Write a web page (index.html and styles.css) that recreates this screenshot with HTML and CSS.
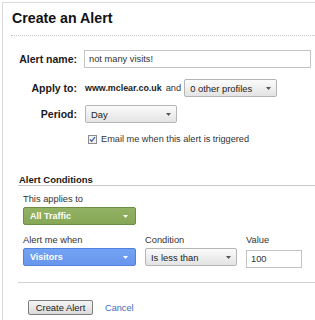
FILE: index.html
```html
<!DOCTYPE html>
<html lang="en">
<head>
    <meta charset="UTF-8">
    <title>Create an Alert</title>
    <link rel="stylesheet" href="styles.css">
</head>
<body>
    <main class="panel">
        <h1 class="panel-title">Create an Alert</h1>

        <form class="alert-form">
            <div class="row row-name">
                <label class="label" for="alert-name">Alert name:</label>
                <input type="text" id="alert-name" class="text-input name-input" value="not many visits!">
            </div>

            <div class="row row-apply">
                <span class="label">Apply to:</span>
                <span class="site">www.mclear.co.uk</span>
                <span class="and">and</span>
                <div class="select select-gray select-profiles">
                    <span>0 other profiles</span>
                    <svg class="arrow" width="5" height="3" viewBox="0 0 5 3"><polygon points="0,0 5,0 2.5,3" fill="#555"/></svg>
                </div>
            </div>

            <div class="row row-period">
                <span class="label">Period:</span>
                <div class="select select-gray select-period">
                    <span>Day</span>
                    <svg class="arrow" width="5" height="3" viewBox="0 0 5 3"><polygon points="0,0 5,0 2.5,3" fill="#555"/></svg>
                </div>
            </div>

            <div class="row row-check">
                <svg class="checkbox" width="9" height="9" viewBox="0 0 9 9">
                    <rect x="0.5" y="0.5" width="8" height="8" fill="#f2f2f2" stroke="#8c8c8c"/>
                    <path d="M2 4.5 L3.7 6.3 L7 2.2" fill="none" stroke="#3b5ea6" stroke-width="1.3"/>
                </svg>
                <span class="check-text">Email me when this alert is triggered</span>
            </div>

            <section class="conditions">
                <h2 class="cond-heading">Alert Conditions</h2>
                <div class="cond-body">
                    <div class="field-label first">This applies to</div>
                    <div class="select select-green">
                        <span>All Traffic</span>
                        <svg class="arrow" width="5" height="3" viewBox="0 0 5 3"><polygon points="0,0 5,0 2.5,3" fill="#fff"/></svg>
                    </div>

                    <div class="cond-row">
                        <div class="col col-metric">
                            <div class="field-label">Alert me when</div>
                            <div class="select select-blue">
                                <span>Visitors</span>
                                <svg class="arrow" width="5" height="3" viewBox="0 0 5 3"><polygon points="0,0 5,0 2.5,3" fill="#fff"/></svg>
                            </div>
                        </div>
                        <div class="col col-condition">
                            <div class="field-label">Condition</div>
                            <div class="select select-gray">
                                <span>Is less than</span>
                                <svg class="arrow" width="5" height="3" viewBox="0 0 5 3"><polygon points="0,0 5,0 2.5,3" fill="#555"/></svg>
                            </div>
                        </div>
                        <div class="col col-value">
                            <div class="field-label">Value</div>
                            <input type="text" class="text-input value-input" value="100">
                        </div>
                    </div>
                </div>

                <div class="footer-sep"></div>
                <div class="actions">
                    <button type="button" class="btn">Create Alert</button>
                    <a href="#" class="cancel">Cancel</a>
                </div>
            </section>
        </form>
    </main>
</body>
</html>
```

FILE: styles.css
```css
/* --- Base --- */
:root {
    --font-body: "Liberation Sans", Arial, sans-serif;
    --color-text: #333333;
    --color-label: #1a1a1a;
    --color-line: #d2d2d2;
}

* { box-sizing: border-box; }
html, body { margin: 0; padding: 0; background: #ffffff; height: 100%; overflow: hidden; }
body { font-family: var(--font-body); color: var(--color-text); }

/* --- Panel --- */
.panel {
    margin: 2px 0 0 2px;
    border-top: 1px solid #d9d9d9;
    border-left: 1px solid #d9d9d9;
    height: calc(100% - 2px);
}
.panel-title {
    margin: 0 0 0 8px;
    padding: 7px 0 8px 1px;
    font-size: 14.2px;
    line-height: 17px;
    font-weight: bold;
    color: #111111;
    border-bottom: 1px dotted #c4c4c4;
}

/* --- Form rows --- */
.alert-form { padding-top: 14px; }
.row { display: flex; align-items: center; }
.row-name, .row-apply, .row-period { height: 18px; }
.row-apply { margin-top: 11px; }
.row-period { margin-top: 8px; }
.row-check { margin-top: 12px; height: 9px; padding-left: 83px; }

.label {
    width: 74px;
    margin-right: 7px;
    text-align: right;
    font-size: 10.5px;
    font-weight: bold;
    color: var(--color-label);
}

.text-input {
    height: 18px;
    border: 1px solid #c4c4c4;
    padding: 0 4px;
    font-family: var(--font-body);
    font-size: 9.3px;
    color: var(--color-text);
    background: #ffffff;
    outline: none;
}
.name-input { width: 227px; }

.site { margin-left: 1px; font-size: 8.9px; font-weight: bold; color: #222222; }
.and { margin-left: 4px; font-size: 9.3px; }

/* --- Dropdowns --- */
.select {
    display: flex;
    align-items: center;
    justify-content: space-between;
    height: 18px;
    padding: 0 5px 0 5px;
    border-radius: 2px;
    font-size: 9.4px;
}
.select-gray {
    border: 1px solid #b5b5b5;
    background: linear-gradient(#fbfbfb, #e3e3e3);
    color: #222222;
}
.select-profiles { width: 93px; margin-left: 3px; }
.select-period { width: 92px; margin-left: 1px; }
.select-green {
    width: 113px;
    padding-left: 6px;
    padding-right: 7px;
    border: 1px solid #6e8d44;
    background: linear-gradient(#93b264, #86a756);
    color: #ffffff;
    font-weight: bold;
    font-size: 9px;
}
.select-blue {
    padding-left: 6px;
    padding-right: 7px;
    border: 1px solid #4f81dd;
    background: linear-gradient(#74a2f3, #6796ec);
    color: #ffffff;
    font-weight: bold;
    font-size: 9px;
}
.arrow { display: block; flex-shrink: 0; }

/* --- Checkbox --- */
.checkbox { display: block; margin-left: 2px; }
.check-text { margin-left: 4px; font-size: 9.2px; line-height: 9px; }

/* --- Conditions --- */
.conditions { margin: 30px 0 0 15px; }
.cond-heading {
    margin: 0;
    padding-left: 1px;
    font-size: 9.5px;
    line-height: 11px;
    font-weight: bold;
    color: var(--color-label);
    border-bottom: 1px solid #c8c8c8;
}
.cond-body { padding-left: 5px; }
.field-label { font-size: 9.3px; line-height: 11px; margin-bottom: 2px; }
.field-label.first { margin-top: 8px; }

.cond-row { display: flex; gap: 9px; margin-top: 10px; }
.col-metric { width: 113px; }
.col-condition { width: 92px; }
.col-value { width: 56px; }
.value-input { width: 56px; }

/* --- Actions --- */
.footer-sep { margin-top: 14px; border-top: 1px solid var(--color-line); }
.actions { display: flex; align-items: center; gap: 12px; padding: 17px 0 0 10px; }
.btn {
    width: 65px;
    height: 15px;
    padding: 0;
    border: 1px solid #7d7d7d;
    border-radius: 2px;
    background: linear-gradient(#f6f6f6, #dadada);
    font-family: var(--font-body);
    font-size: 9.4px;
    color: #222222;
    line-height: 13px;
}
.cancel { font-size: 9.2px; color: #3e6db4; text-decoration: none; }
```
